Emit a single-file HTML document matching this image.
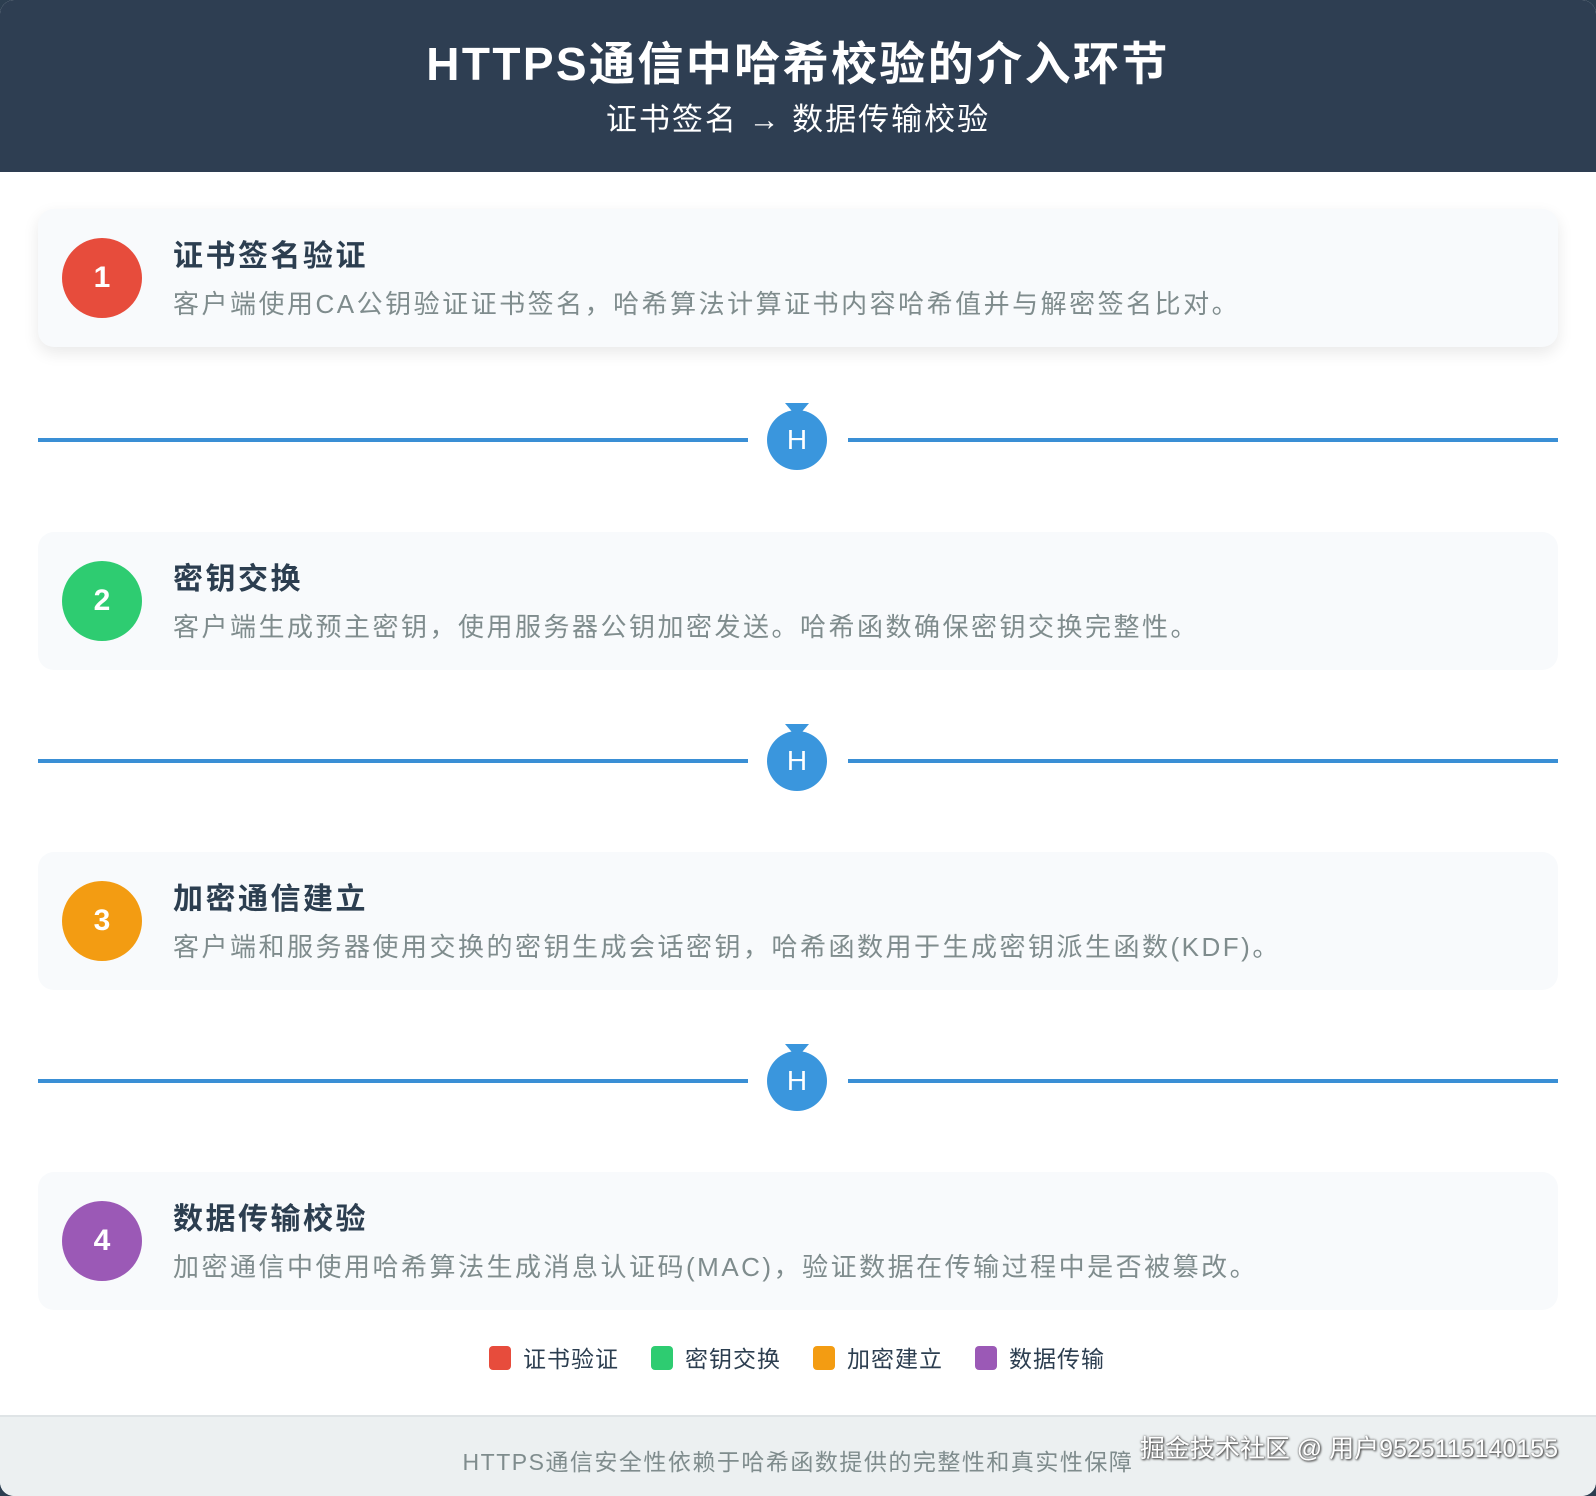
<!DOCTYPE html>
<html><head><meta charset="utf-8"><style>
*{margin:0;padding:0;box-sizing:border-box}
html,body{width:1596px;height:1496px;overflow:hidden;background:#2c3e50}
body{font-family:"Liberation Sans","Noto Sans CJK SC",sans-serif}
.wrap{position:absolute;left:0;top:0;width:1596px;height:1496px;background:#fff;border-radius:14px;overflow:hidden}
.hdr{position:absolute;left:0;top:0;width:1596px;height:172px;background:#2e3e52;color:#fff;text-align:center}
.hdr h1{position:absolute;top:34px;width:100%;font-size:46px;font-weight:bold;line-height:60px;letter-spacing:2.4px}
.hdr p{position:absolute;top:100px;width:100%;font-size:31px;line-height:40px;letter-spacing:2px}
.card{position:absolute;left:38px;width:1520px;height:138px;background:#f8fafc;border-radius:16px}
.card.s{box-shadow:0 6px 16px rgba(0,0,0,0.09)}
.num{position:absolute;left:24px;top:29px;width:80px;height:80px;border-radius:50%;color:#fff;font-weight:bold;font-size:30px;line-height:80px;text-align:center}
.t{position:absolute;left:135px;top:28px;font-size:30px;font-weight:bold;color:#2c3e50;line-height:40px;letter-spacing:2.5px}
.d{position:absolute;left:135px;top:77px;font-size:26px;color:#7f8c8d;line-height:36px;white-space:nowrap;letter-spacing:2.5px}
.con{position:absolute;left:38px;width:1520px;height:70px}
.con .l{position:absolute;top:33px;height:4px;background:#3a8fd5}
.con .c{position:absolute;left:729px;top:5px;width:60px;height:60px;border-radius:50%;background:#3a96dd;color:#fff;font-size:28px;line-height:60px;text-align:center}
.con .n{position:absolute;left:747px;top:-2px;width:0;height:0;border-left:12px solid transparent;border-right:12px solid transparent;border-top:14px solid #3a96dd}
.leg{position:absolute;top:1346px;font-size:23px;color:#2c3e50;line-height:26px;letter-spacing:1px}
.leg i{display:inline-block;width:22px;height:24px;border-radius:4px;vertical-align:top;margin-right:12px}
.ft{position:absolute;left:0;top:1415px;width:1596px;height:81px;background:#ecf0f1;border-top:2px solid #dfe4e6}
.ft p{position:absolute;left:0;width:1596px;top:26px;text-align:center;font-size:23px;color:#7f8c8d;letter-spacing:1.5px}
.wm{position:absolute;right:38px;top:1429px;font-size:25px;color:#fff;text-shadow:0 0 2px #555,1px 1px 2px #333}
</style></head><body><div class="wrap">
<div class="hdr"><h1>HTTPS通信中哈希校验的介入环节</h1><p>证书签名 → 数据传输校验</p></div>

<div class="card s" style="top:209px"><div class="num" style="background:#e74c3c">1</div><div class="t">证书签名验证</div><div class="d">客户端使用CA公钥验证证书签名，哈希算法计算证书内容哈希值并与解密签名比对。</div></div>
<div class="con" style="top:405px"><div class="l" style="left:0;width:710px"></div><div class="l" style="left:810px;width:710px"></div><div class="c">H</div><div class="n"></div></div>

<div class="card" style="top:532px"><div class="num" style="background:#2ecc71">2</div><div class="t">密钥交换</div><div class="d">客户端生成预主密钥，使用服务器公钥加密发送。哈希函数确保密钥交换完整性。</div></div>
<div class="con" style="top:726px"><div class="l" style="left:0;width:710px"></div><div class="l" style="left:810px;width:710px"></div><div class="c">H</div><div class="n"></div></div>

<div class="card" style="top:852px"><div class="num" style="background:#f39c12">3</div><div class="t">加密通信建立</div><div class="d">客户端和服务器使用交换的密钥生成会话密钥，哈希函数用于生成密钥派生函数(KDF)。</div></div>
<div class="con" style="top:1046px"><div class="l" style="left:0;width:710px"></div><div class="l" style="left:810px;width:710px"></div><div class="c">H</div><div class="n"></div></div>

<div class="card" style="top:1172px"><div class="num" style="background:#9b59b6">4</div><div class="t">数据传输校验</div><div class="d">加密通信中使用哈希算法生成消息认证码(MAC)，验证数据在传输过程中是否被篡改。</div></div>

<div class="leg" style="left:489px"><i style="background:#e74c3c"></i>证书验证</div>
<div class="leg" style="left:651px"><i style="background:#2ecc71"></i>密钥交换</div>
<div class="leg" style="left:813px"><i style="background:#f39c12"></i>加密建立</div>
<div class="leg" style="left:975px"><i style="background:#9b59b6"></i>数据传输</div>

<div class="ft"><p>HTTPS通信安全性依赖于哈希函数提供的完整性和真实性保障</p></div>
<div class="wm">掘金技术社区 @ 用户9525115140155</div>
</div></body></html>
